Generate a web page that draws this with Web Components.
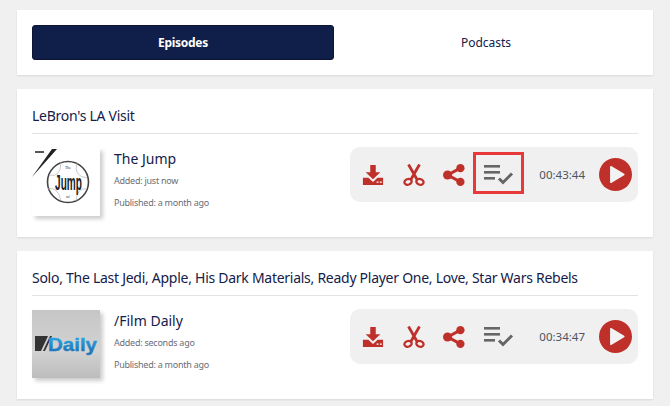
<!DOCTYPE html>
<html>
<head>
<meta charset="utf-8">
<style>
html, body { margin: 0; background: #f0f0f0; }
body { width: 670px; height: 406px; overflow: hidden; font-family: "Noto Sans", sans-serif; color: #14204a; }
</style>
</head>
<body>
<app-page>
  <tab-bar></tab-bar>
  <episode-card heading="LeBron's LA Visit" show="The Jump" added="just now" published="a month ago" duration="00:43:44" art="jump" marked></episode-card>
  <episode-card heading="Solo, The Last Jedi, Apple, His Dark Materials, Ready Player One, Love, Star Wars Rebels" show="/Film Daily" added="seconds ago" published="a month ago" duration="00:34:47" art="daily"></episode-card>
</app-page>

<script>
const RED = '#c0302a';
const GREY = '#666';

const ICONS = {
    download: `<svg width="22" height="22" viewBox="0 0 24 24"><path fill="${RED}" d="M9 1h6v8h5l-8 7.5L4 9h5z"/><path fill="${RED}" d="M1 15h6l5 4.500 5-4.500h6v8H1z"/><rect x="16" y="19" width="2" height="1.600" fill="#f0f0f0"/><rect x="19.500" y="19" width="2" height="1.600" fill="#f0f0f0"/></svg>`,
    scissors: `<svg width="22" height="22" viewBox="0 0 24 24" fill="none" stroke="${RED}"><path stroke-width="3" d="M6 0.500l10 17.500M18 0.500L8 18"/><ellipse cx="5.500" cy="19.500" rx="4" ry="3.100" stroke-width="2.500" transform="rotate(-20 5.500 19.500)"/><ellipse cx="18.500" cy="19.500" rx="4" ry="3.100" stroke-width="2.500" transform="rotate(20 18.500 19.500)"/></svg>`,
    share: `<svg width="22" height="22" viewBox="0 0 24 24" fill="${RED}"><path d="M5 12L19 4.500M5 12l14 7.500" stroke="${RED}" stroke-width="3.200"/><circle cx="5" cy="12" r="5"/><circle cx="19" cy="4.500" r="4.500"/><circle cx="19" cy="19.500" r="4.500"/></svg>`,
    queue: `<svg width="30" height="24" viewBox="0 0 30 24" fill="${GREY}"><rect x="0" y="2" width="16" height="2.600"/><rect x="0" y="8" width="16" height="2.600"/><rect x="0" y="14" width="11" height="2.600"/><path fill="none" stroke="${GREY}" stroke-width="3" d="M15 15.500l4 4 9-9"/></svg>`,
    play: `<svg width="33" height="33" viewBox="0 0 32 32"><circle cx="16" cy="16" r="16" fill="${RED}"/><path fill="#f3f3f3" stroke="#f3f3f3" stroke-width="1.500" stroke-linejoin="round" d="M11.500 8.500L24 16l-12.500 7.500z"/></svg>`
};

const ART = {
    jump: `<svg width="68" height="68" viewBox="0 0 68 68">
        <rect width="68" height="68" fill="#fff"/>
        <path d="M0 29L20 1h5z" fill="#222"/>
        <rect x="3" y="3" width="9" height="2" fill="#555"/>
        <circle cx="36" cy="34" r="20.500" fill="#fff" stroke="#444" stroke-width="1.600"/>
        <path d="M17 27q12 3 12-13M45 15q-4 13 10 15M16 41q10-3 13 12M55 41q-10-2-11 12" fill="none" stroke="#bbb" stroke-width=".8"/>
        <text transform="translate(36.500 42) scale(.72 1.600)" text-anchor="middle" font-family="Liberation Sans" font-weight="700" font-size="14" fill="#222">Jump</text>
        <text x="36" y="21" text-anchor="middle" font-family="Liberation Serif" font-size="4" fill="#333">The</text>
        <text x="36" y="50" text-anchor="middle" font-family="Liberation Sans" font-size="4" fill="#444">w/</text>
    </svg>`,
    daily: `<svg width="68" height="68" viewBox="0 0 68 68">
        <defs>
            <linearGradient id="bg" x1="0" y1="0" x2="0" y2="1"><stop offset="0" stop-color="#c6c6c6"/><stop offset=".6" stop-color="#d2d2d2"/><stop offset="1" stop-color="#bcbcbc"/></linearGradient>
            <linearGradient id="blue" x1="0" y1="0" x2="0" y2="1"><stop offset=".2" stop-color="#2aa0de"/><stop offset=".8" stop-color="#1f78bb"/></linearGradient>
        </defs>
        <rect width="68" height="68" fill="url(#bg)"/>
        <path d="M3 26h13l-7 15H3z" fill="#333"/>
        <path d="M11 41l7-15h2l-7 15z" fill="#333"/>
        <text x="16" y="41" font-family="Liberation Sans" font-weight="700" font-size="19" textLength="49" lengthAdjust="spacingAndGlyphs" fill="url(#blue)" stroke="url(#blue)" stroke-width=".4">Daily</text>
    </svg>`
};

class AppPage extends HTMLElement {
    constructor() {
        super();
        this.attachShadow({ mode: 'open' });
        this.shadowRoot.innerHTML = `
            <style>
                :host { display: flex; flex-direction: column; gap: 14px; padding: 10px 17px 0; }
            </style>
            <slot></slot>
        `;
    }
}

class TabBar extends HTMLElement {
    constructor() {
        super();
        this.attachShadow({ mode: 'open' });
        this.shadowRoot.innerHTML = `
            <style>
                :host { display: grid; grid-template-columns: 302px 1fr; height: 35px; padding: 15px; background: #fff; box-shadow: 0 1px 2px rgba(0,0,0,.1); font-size: 12px; color: #14204a; }
                div { display: flex; align-items: center; justify-content: center; }
                .on { background: #101f49; color: #fff; font-weight: 700; border-radius: 3px; border: 1px solid #0b1433; box-sizing: border-box; letter-spacing: -.3px; }
            </style>
            <div class="on">Episodes</div>
            <div>Podcasts</div>
        `;
    }
}

class EpisodeCard extends HTMLElement {
    constructor() {
        super();
        this.attachShadow({ mode: 'open' });
    }

    connectedCallback() {
        const duration = this.getAttribute('duration');
        const art = this.getAttribute('art');
        const marked = this.hasAttribute('marked');
        this.shadowRoot.innerHTML = `
            <style>
                :host { display: block; height: 148px; box-sizing: border-box; padding: 17px 15px 0; background: #fff; box-shadow: 0 1px 2px rgba(0,0,0,.1); color: #14204a; }
                h2 { margin: 0; height: 28px; box-sizing: border-box; border-bottom: 1px solid #e2e2e2; font-size: 14px; line-height: 20px; font-weight: 400; letter-spacing: -.27px; white-space: nowrap; }
                .row { display: flex; align-items: flex-start; margin-top: 13px; }
                .art { width: 68px; height: 68px; margin-top: 1px; box-shadow: 3px 3px 4px rgba(0,0,0,.2); }
                .art svg { display: block; }
                .info { margin-left: 14px; padding-top: 2px; flex: 1; }
                h3 { margin: 0; font-size: 14px; line-height: 20px; font-weight: 400; }
                p { margin: 0; font-size: 9px; line-height: 12px; color: #6a6e78; letter-spacing: -.25px; }
                .added { margin-top: 6px; }
                .published { margin-top: 10px; }
                .controls { width: 288px; height: 55px; box-sizing: border-box; background: #f0f0f0; border-radius: 10px; display: flex; align-items: center; padding: 0 6px 0 12px; }
                .btn { width: 22px; height: 22px; margin-right: 18.5px; flex: none; }
                .queue { position: relative; width: 30px; height: 24px; margin: 0; }
                .mark { position: absolute; left: -10.500px; top: -11px; width: 51px; height: 42px; box-sizing: border-box; border: 3px solid #e8383a; }
                .time { margin-left: auto; font-size: 11.500px; color: #4d5360; }
                .play { margin-left: 14px; height: 33px; }
                svg { display: block; }
            </style>
            <h2>${this.getAttribute('heading')}</h2>
            <div class="row">
                <div class="art">${ART[art]}</div>
                <div class="info">
                    <h3>${this.getAttribute('show')}</h3>
                    <p class="added">Added: ${this.getAttribute('added')}</p>
                    <p class="published">Published: ${this.getAttribute('published')}</p>
                </div>
                <div class="controls">
                    <div class="btn">${ICONS.download}</div>
                    <div class="btn">${ICONS.scissors}</div>
                    <div class="btn">${ICONS.share}</div>
                    <div class="btn queue">${ICONS.queue}${marked ? '<div class="mark"></div>' : ''}</div>
                    <div class="time">${duration}</div>
                    <div class="play">${ICONS.play}</div>
                </div>
            </div>
        `;
    }
}

customElements.define('app-page', AppPage);
customElements.define('tab-bar', TabBar);
customElements.define('episode-card', EpisodeCard);
</script>
</body>
</html>
